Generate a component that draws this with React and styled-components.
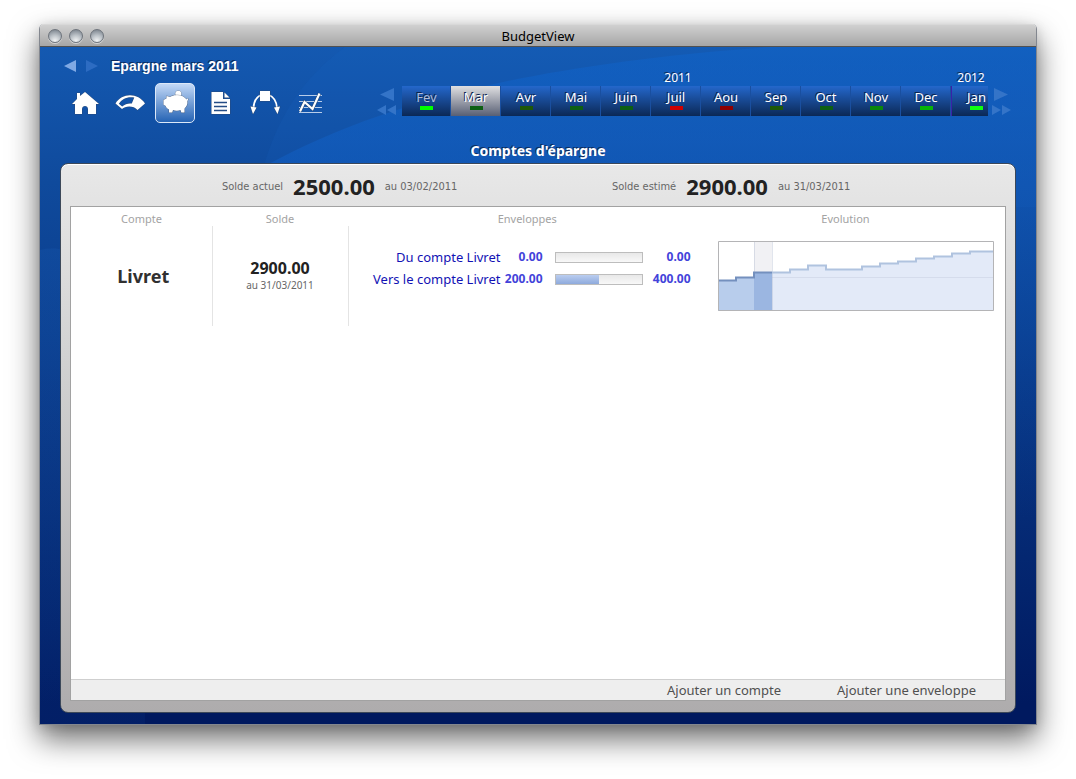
import React from "react";
import styled, { createGlobalStyle, css } from "styled-components";

const GlobalStyle = createGlobalStyle`
  *, *::before, *::after { box-sizing: border-box; }
  body { margin: 0; background: #fff; }
  body, button { font-family: "Noto Sans", "Open Sans", sans-serif; }
  button { margin: 0; padding: 0; border: 0; background: none; color: inherit; cursor: pointer; }
`;

const Page = styled.div`
  min-height: 100vh;
  padding: 24px 39px 54px;
  display: flex;
  flex-direction: column;
`;

const Window = styled.div`
  flex: 1;
  display: flex;
  flex-direction: column;
  border: 1px solid #83878f;
  border-top: 0;
  border-radius: 5px 5px 0 0;
  box-shadow: 0 14px 30px rgba(0, 0, 0, 0.58), 0 2px 12px rgba(0, 0, 0, 0.12);
`;

const TitleBar = styled.div`
  height: 23px;
  padding: 0 8px;
  display: grid;
  grid-template-columns: 1fr auto 1fr;
  align-items: center;
  border-top: 1px solid #d8d8d8;
  border-bottom: 1px solid #515151;
  border-radius: 4px 4px 0 0;
  background: linear-gradient(#d0d0d0, #a6a6a6);
`;

const Lights = styled.div`
  display: flex;
  gap: 7px;
`;

const Light = styled.button`
  width: 14px;
  height: 14px;
  border: 1px solid #6e747c;
  border-radius: 50%;
  background: radial-gradient(circle at 50% 90%, #f2f4f5 0, #bcc2c8 45%, #717a84 100%);
  box-shadow: 0 1px 0 rgba(255, 255, 255, 0.5);
`;

const WindowTitle = styled.h1`
  margin: 0;
  font-size: 13px;
  line-height: 20px;
  font-weight: 400;
  color: #000;
`;

const Body = styled.div`
  position: relative;
  flex: 1;
  display: flex;
  flex-direction: column;
  padding: 10px 20px 11px;
  overflow: hidden;
  background: linear-gradient(#1459b1, #0f4a9c 20%, #0a3d8d 42%, #00195f 97%);
`;

const Waves = styled.svg`
  position: absolute;
  inset: 0;
  width: 100%;
  height: 100%;
`;

const Header = styled.header`
  position: relative;
  display: flex;
`;

const Navigation = styled.nav`
  flex: none;
  width: 316px;
`;

const History = styled.div`
  height: 18px;
  padding-left: 3px;
  display: flex;
  align-items: center;
  gap: 8px;
`;

const HistoryButton = styled.button`
  width: 14px;
  height: 14px;
  display: flex;
  color: ${(p) => (p.disabled ? "#2d6cc2" : "#7fa9e4")};
`;

const PageTitle = styled.h2`
  margin: 0 0 0 4px;
  font: bold 14px/18px "Liberation Sans", sans-serif;
  color: #fff;
  text-shadow: -1px -1px 0 #0d2b5c;
`;

const Views = styled.div`
  display: flex;
  gap: 5px;
  padding: 8px 0 0 5px;
`;

const ViewButton = styled.button`
  width: 40px;
  height: 40px;
  display: flex;
  align-items: center;
  justify-content: center;
  color: #fff;
  border: 1px solid transparent;
  border-radius: 5px;
  ${(p) =>
    p.$active &&
    css`
      border-color: #dce8f8;
      background: linear-gradient(#c3d9f7, #2563b4);
    `}
`;

const Timeline = styled.div`
  flex: 1;
  min-width: 0;
  display: flex;
  padding: 12px 4px 0 0;
`;

const Scroll = styled.div`
  flex: none;
  width: ${(p) => (p.$end ? "24px" : "26px")};
  padding: 17px 0 0 ${(p) => (p.$end ? "3px" : "1px")};
  display: flex;
  flex-direction: column;
  gap: 4px;
`;

const ScrollButton = styled.button`
  display: flex;
  width: 20px;
  height: ${(p) => (p.$fast ? "10px" : "15px")};
  color: #3474c8;
`;

const Years = styled.div`
  flex: 1;
  min-width: 0;
  display: flex;
  overflow: hidden;
`;

const Year = styled.section`
  flex: ${(p) => (p.$last ? "1 1 0" : "none")};
  min-width: 0;
`;

const YearLabel = styled.h3`
  margin: 0;
  padding-left: 3px;
  text-align: center;
  font-size: 12px;
  line-height: 17px;
  font-weight: 400;
  color: #fff;
  text-shadow: -1px -1px 0 #0d2b5c;
`;

const Months = styled.div`
  display: flex;
`;

const Month = styled.button`
  flex: none;
  width: ${(p) => (p.$clipped ? "49px" : "50px")};
  height: 30px;
  display: flex;
  flex-direction: column;
  align-items: center;
  padding: 2px 0 0 1px;
  border-right: 1px solid #1a4f9f;
  border-left: ${(p) => (p.$yearStart ? "1px solid #3a22a8" : "0")};
  background: ${(p) =>
    p.$active ? "linear-gradient(#e0e0e2, #585f74)" : "linear-gradient(#2467cb, #0b2855)"};
  color: ${(p) => (p.$past ? "#aebdd8" : "#fff")};
  font-size: 13px;
  line-height: 18px;
  text-shadow: -1px -1px 0 #0b2450;
  &::after {
    content: "";
    width: 13px;
    height: 4px;
    background: ${(p) => p.$status};
  }
`;

const SectionTitle = styled.h2`
  position: relative;
  margin: 0;
  padding: 18px 0 2px;
  text-align: center;
  font-size: 14px;
  line-height: 20px;
  font-weight: 700;
  color: #fff;
  text-shadow: -1px -1px 0 #0d2b5c;
`;

const Panel = styled.main`
  position: relative;
  flex: 1;
  display: flex;
  flex-direction: column;
  padding: 0 9px 11px;
  border: 1px solid #3c4859;
  border-radius: 8px;
  background: linear-gradient(#e8e8e8, #d0d0d0 38%, #aeacad);
  box-shadow: inset 0 1px 0 #fff;
`;

const Summary = styled.div`
  height: 42px;
  padding: 3px 10px 0 152px;
  display: flex;
  align-items: center;
`;

const Total = styled.div`
  flex: none;
  width: 390px;
  display: flex;
  align-items: center;
  gap: 10px;
  font-family: "DejaVu Sans Condensed", "Noto Sans", sans-serif;
  font-size: 11px;
  line-height: 16px;
  color: #666;
`;

const TotalAmount = styled.strong`
  padding-bottom: 2px;
  font-family: "Noto Sans", sans-serif;
  font-size: 22px;
  line-height: 28px;
  color: #222;
`;

const Sheet = styled.div`
  flex: 1;
  display: flex;
  flex-direction: column;
  border: 1px solid #a2a2a2;
  background: #fff;
`;

const Accounts = styled.table`
  width: 100%;
  table-layout: fixed;
  border-collapse: collapse;
`;

const Head = styled.th`
  width: ${(p) => p.$width || "auto"};
  height: 19px;
  padding: ${(p) => p.$pad || "0"};
  padding-top: 5px;
  font-size: 11px;
  line-height: 14px;
  font-weight: 400;
  text-align: center;
  color: #a3a3a3;
`;

const Cell = styled.td`
  height: 100px;
  padding: ${(p) => p.$pad || "0"};
  text-align: center;
  vertical-align: ${(p) => p.$valign || "middle"};
  border-right: ${(p) => (p.$divider ? "1px solid #e4e4e4" : "0")};
`;

const AccountName = styled.button`
  font-size: 18px;
  line-height: 24px;
  font-weight: 700;
  color: #303030;
`;

const Balance = styled.strong`
  display: block;
  font-size: 16px;
  line-height: 18px;
  color: #222;
`;

const BalanceDate = styled.span`
  display: block;
  font-size: 10px;
  line-height: 16px;
  color: #666;
`;

const Envelopes = styled.div`
  display: flex;
  flex-direction: column;
`;

const Envelope = styled.div`
  height: 22px;
  display: grid;
  grid-template-columns: 1fr 42px 112px 36px;
  align-items: center;
`;

const EnvelopeName = styled.button`
  text-align: right;
  font-size: 13px;
  line-height: 20px;
  color: #1212b4;
  white-space: nowrap;
`;

const Amount = styled.button`
  justify-self: end;
  font-size: 12px;
  line-height: 20px;
  font-weight: 700;
  color: #4343da;
`;

const Gauge = styled.div`
  height: 11px;
  margin: 0 12px;
  border: 1px solid #bdbdbd;
  background: linear-gradient(#e8e8e8, #f8f8f8);
`;

const GaugeFill = styled.div`
  height: 100%;
  background: linear-gradient(#bacdf0, #8eaadc);
`;

const Chart = styled.svg`
  display: block;
  width: 100%;
  height: 70px;
`;

const Actions = styled.div`
  height: 21px;
  margin-top: auto;
  padding-right: 29px;
  display: flex;
  justify-content: flex-end;
  gap: 56px;
  border-top: 1px solid #cfcfcf;
  background: #eee;
`;

const Action = styled.button`
  font-size: 13px;
  line-height: 20px;
  color: #505050;
`;

const Arrow = ({ left, size = 14 }) => (
  <svg width={size} height={size} viewBox="0 0 14 14" aria-hidden="true">
    <path fill="currentColor" d={left ? "M13 1v12L1 7z" : "M1 1v12L13 7z"} />
  </svg>
);

const ScrollArrow = ({ left, fast }) => (
  <svg width="20" height={fast ? 10 : 15} aria-hidden="true">
    <g fill="currentColor" transform={left ? undefined : "translate(20 0) scale(-1 1)"}>
      {fast ? <path d="M9 0v10L0 5zM19 0v10l-9-5z" /> : <path d="M17 2v13L3 8.500z" />}
    </g>
  </svg>
);

const edge = { stroke: "#3a4456", strokeOpacity: 0.55, strokeWidth: 1, paintOrder: "stroke" };

const icons = {
  home: (
    <svg width="30" height="30" viewBox="0 0 30 30">
      <path {...edge} fill="currentColor" d="M15 4l-5 4V5H7v6l-5 5h3v10h7v-5c0-4 6-4 6 0v5h8V16h3z" />
    </svg>
  ),
  gauge: (
    <svg width="32" height="30" viewBox="0 0 32 30">
      <path {...edge} fill="currentColor" fillRule="evenodd" d="M1.500 15.500C8 4.500 24 4.500 31 15.500L23.500 22C20 17.500 11.500 17.500 8 21zM4.800 15.800L8.200 18.500c2.800-2.500 6-3.400 9.600-3L20.300 9.500C13 8.300 8 11 4.800 15.800z" />
    </svg>
  ),
  piggy: (
    <svg width="30" height="30" viewBox="0 0 30 30">
      <circle {...edge} cx="18.300" cy="5.800" r="3" fill="currentColor" />
      <path {...edge} fill="currentColor" d="M3.500 12l3-1.500V8l3.500 1c2-1.200 4-1.800 6-1.800h1.500c4.500 0 7.500 2 9 4.300l1-1.300c1 .8.8 2-.2 2.600.5 3.500-.8 6-2.800 7.800v4h-3.200l-.8-2.500c-2.500.8-5 .8-7.500 0L12.200 24.500H9v-3c-1.800-.8-2.800-2-3.500-3.800l-2-1z" />
    </svg>
  ),
  document: (
    <svg width="30" height="30" viewBox="0 0 30 30">
      <path {...edge} fill="currentColor" d="M6.500 4H18v7h7v15H6.500z" />
      <path {...edge} fill="currentColor" d="M19.500 4.500L24.500 9.500h-5z" />
      <path stroke="#254d86" strokeWidth="1.500" d="M9 14.500h13M9 18.500h13M9 22.500h13" />
    </svg>
  ),
  flow: (
    <svg width="32" height="30" viewBox="0 0 32 30">
      <path fill="none" stroke="currentColor" strokeWidth="1.800" d="M12 7C7 9 5 13 4.500 20M20 7c5 2 7.500 6 8 13" />
      <path {...edge} fill="currentColor" d="M11 3h10v10H11zM1.500 18.500l6 1L4 26zM31 18.500l-6 1 3.500 6.500z" />
    </svg>
  ),
  chart: (
    <svg width="30" height="30" viewBox="0 0 30 30">
      <path stroke="#b8cdea" d="M4 7.500h23M4 13.500h23M4 19.500h23M4 24.500h23" />
      <path fill="none" stroke="#26456f" strokeWidth="3.200" d="M5 23.500L9.500 14l8 7L24.500 5.500" />
      <path fill="none" stroke="currentColor" strokeWidth="2.200" d="M5 23.500L9.500 14l8 7L24.500 5.500" />
    </svg>
  ),
};

const views = [
  ["home", "Accueil"],
  ["gauge", "Budget"],
  ["piggy", "Epargne"],
  ["document", "Opérations"],
  ["flow", "Catégorisation"],
  ["chart", "Analyse"],
];

const years = [
  {
    year: "2011",
    months: [
      ["Fev", "#00ff00"],
      ["Mar", "#0d5f12"],
      ["Avr", "#1e5808"],
      ["Mai", "#0d5f12"],
      ["Juin", "#0d5f12"],
      ["Juil", "#d00000"],
      ["Aou", "#8f0000"],
      ["Sep", "#1e5808"],
      ["Oct", "#0d5f12"],
      ["Nov", "#0a870c"],
      ["Dec", "#08b408"],
    ],
  },
  { year: "2012", months: [["Jan", "#10ff10"]] },
];

const envelopes = [
  { name: "Du compte Livret", actual: "0.00", planned: "0.00", ratio: 0 },
  { name: "Vers le compte Livret", actual: "200.00", planned: "400.00", ratio: 0.5 },
];

const pastLine = "M0 39.500H18V36.500H36V31.500H54";
const futureLine =
  "M54 31.500H72V28.500H90V24.500H108V28.500H144V25.500H162V22.500H180V20.500H198V17.500H216V15.500H234V12.500H252V10.500H276";

const EvolutionChart = () => (
  <Chart viewBox="0 0 276 70" preserveAspectRatio="none" role="img" aria-label="Evolution">
    <path fill="#fff" d="M0 0h276v70H0z" />
    <path fill="#f1f1f4" d="M36 0h18v70H36z" />
    <path fill="#b8cdec" d="M0 39H18V36H36V70H0z" />
    <path fill="#9bb6e1" d="M36 31h18v39H36z" />
    <path fill="#e3eaf8" d={futureLine + "V70H54z"} />
    <path stroke="#d5dcec" d="M54 36.500h222" />
    <path stroke="#9daac4" strokeOpacity=".3" d="M36.500 0v31M54.500 0v70" />
    <path fill="none" stroke="#7490be" strokeWidth="2" d={pastLine} />
    <path fill="none" stroke="#b0c3df" strokeWidth="2" d={futureLine} />
    <path fill="none" stroke="#b4b4b6" d="M.5.5h275v69H.5z" />
  </Chart>
);

export default function App() {
  return (
    <Page>
      <GlobalStyle />
      <Window>
        <TitleBar>
          <Lights>
            <Light aria-label="Fermer" />
            <Light aria-label="Réduire" />
            <Light aria-label="Agrandir" />
          </Lights>
          <WindowTitle>BudgetView</WindowTitle>
        </TitleBar>
        <Body>
          <Waves viewBox="0 0 996 677" preserveAspectRatio="none" aria-hidden="true">
            <defs>
              <linearGradient id="wave" x1="0" y1="0" x2="0" y2="1">
                <stop offset="0" stopColor="#0f66d0" stopOpacity=".42" />
                <stop offset=".2" stopColor="#1263cc" stopOpacity=".42" />
                <stop offset=".7" stopColor="#0a4aa8" stopOpacity="0" />
              </linearGradient>
              <linearGradient id="swell" x1="0" y1="0" x2="0" y2="1">
                <stop offset="0" stopColor="#1a5cb4" stopOpacity=".25" />
                <stop offset="1" stopColor="#1a5cb4" stopOpacity=".09" />
              </linearGradient>
            </defs>
            <path fill="#1c6cd0" fillOpacity=".11" d="M215 160C225 95 250 40 305 0H996V160z" />
            <path fill="url(#wave)" d="M190 140C300 70 450 20 730 0H996V677H190z" />
            <path fill="url(#swell)" d="M0 203C60 190 105 260 105 677H0z" />
          </Waves>
          <Header>
            <Navigation>
              <History>
                <HistoryButton aria-label="Précédent"><Arrow left /></HistoryButton>
                <HistoryButton aria-label="Suivant" disabled><Arrow /></HistoryButton>
                <PageTitle>Epargne mars 2011</PageTitle>
              </History>
              <Views>
                {views.map(([icon, label]) => (
                  <ViewButton key={icon} aria-label={label} $active={icon === "piggy"}>
                    {icons[icon]}
                  </ViewButton>
                ))}
              </Views>
            </Navigation>
            <Timeline>
              <Scroll>
                <ScrollButton aria-label="Mois précédent"><ScrollArrow left /></ScrollButton>
                <ScrollButton aria-label="Année précédente" $fast><ScrollArrow left fast /></ScrollButton>
              </Scroll>
              <Years>
                {years.map(({ year, months }, y) => (
                  <Year key={year} $last={y === years.length - 1}>
                    <YearLabel>{year}</YearLabel>
                    <Months>
                      {months.map(([name, status], m) => (
                        <Month
                          key={name}
                          $status={status}
                          $active={name === "Mar"}
                          $past={name === "Fev"}
                          $clipped={y === 0 && m === 0}
                          $yearStart={y > 0 && m === 0}
                        >
                          {name}
                        </Month>
                      ))}
                    </Months>
                  </Year>
                ))}
              </Years>
              <Scroll $end>
                <ScrollButton aria-label="Mois suivant"><ScrollArrow /></ScrollButton>
                <ScrollButton aria-label="Année suivante" $fast><ScrollArrow fast /></ScrollButton>
              </Scroll>
            </Timeline>
          </Header>
          <SectionTitle>Comptes d'épargne</SectionTitle>
          <Panel>
            <Summary>
              <Total>
                <span>Solde actuel</span>
                <TotalAmount>2500.00</TotalAmount>
                <span>au 03/02/2011</span>
              </Total>
              <Total>
                <span>Solde estimé</span>
                <TotalAmount>2900.00</TotalAmount>
                <span>au 31/03/2011</span>
              </Total>
            </Summary>
            <Sheet>
              <Accounts>
                <thead>
                  <tr>
                    <Head scope="col" $width="141px">Compte</Head>
                    <Head scope="col" $width="136px">Solde</Head>
                    <Head scope="col" $pad="0 0 0 10px">Enveloppes</Head>
                    <Head scope="col" $width="308px" $pad="0 10px 0 0">Evolution</Head>
                  </tr>
                </thead>
                <tbody>
                  <tr>
                    <Cell $divider $pad="0 0 0 4px"><AccountName>Livret</AccountName></Cell>
                    <Cell $divider>
                      <Balance>2900.00</Balance>
                      <BalanceDate>au 31/03/2011</BalanceDate>
                    </Cell>
                    <Cell $pad="20px 6px 0 0" $valign="top">
                      <Envelopes>
                        {envelopes.map((e) => (
                          <Envelope key={e.name}>
                            <EnvelopeName>{e.name}</EnvelopeName>
                            <Amount>{e.actual}</Amount>
                            <Gauge>
                              <GaugeFill style={{ width: `${e.ratio * 100}%` }} />
                            </Gauge>
                            <Amount>{e.planned}</Amount>
                          </Envelope>
                        ))}
                      </Envelopes>
                    </Cell>
                    <Cell $pad="0 11px 0 21px"><EvolutionChart /></Cell>
                  </tr>
                </tbody>
              </Accounts>
              <Actions>
                <Action>Ajouter un compte</Action>
                <Action>Ajouter une enveloppe</Action>
              </Actions>
            </Sheet>
          </Panel>
        </Body>
      </Window>
    </Page>
  );
}
